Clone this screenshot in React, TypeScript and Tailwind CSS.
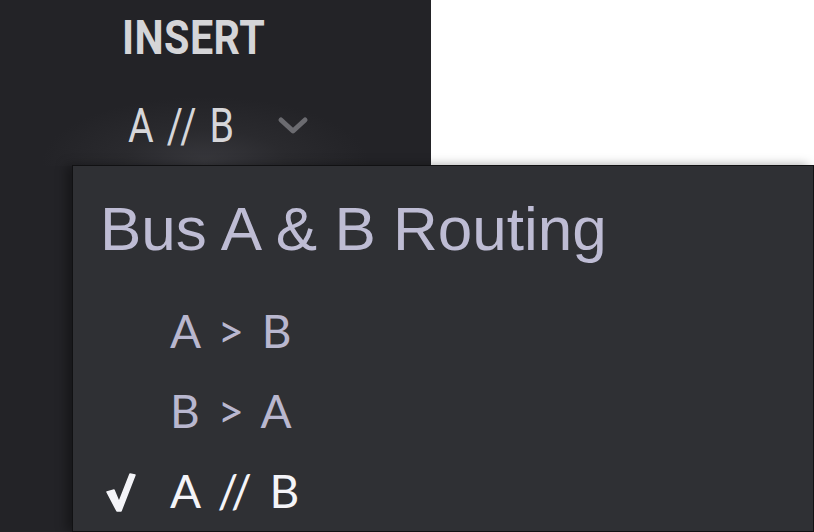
import { useState } from "react";

const routes = ["A > B", "B > A", "A // B"];

export default function App() {
  const [selected, setSelected] = useState("A // B");

  return (
    <div className="relative w-[814px] h-[532px] overflow-hidden bg-white">
      {/* insert slot panel */}
      <div className="w-[431px] h-full bg-[#232327] flex flex-col items-start">
        <div className="pl-[122px] pt-[14px] h-[70px]">
          <h1 className="font-['Roboto',sans-serif] font-bold text-[48px] leading-[48px] text-[#d5d5d8] origin-left scale-x-[0.86] tracking-[0.5px]">
            INSERT
          </h1>
        </div>
        <button className="mt-[26px] ml-[40px] w-[330px] h-[70px] flex items-start gap-[44px] pl-[88px] pt-[6px] bg-[radial-gradient(ellipse_at_50%_95%,#38383d_0%,#2a2a2e_35%,transparent_70%)]">
          <span className="font-['Roboto',sans-serif] font-normal text-[48px] leading-[48px] text-[#d6d6d9] origin-left scale-x-[0.82] tracking-[2px] whitespace-pre">
            A // B
          </span>
          <svg width="32" height="20" viewBox="0 0 32 20" className="-ml-[26px] mt-[14px]">
            <path d="M4 4 L16 15 L28 4" fill="none" stroke="#6b6b70" strokeWidth="5" strokeLinecap="round" strokeLinejoin="round" />
          </svg>
        </button>
      </div>

      {/* routing dropdown */}
      <div className="absolute left-[72px] top-[165px] right-0 bottom-0 bg-[#2f3034] border border-[#111113] shadow-[-6px_0_10px_rgba(0,0,0,0.35)]">
        <div className="pl-[27px] pt-[27px] font-['Liberation_Sans',Arial,sans-serif] text-[62px] leading-[72px] text-[#bebcd4]">
          Bus A &amp; B Routing
        </div>
        <ul className="mt-[26px] flex flex-col">
          {routes.map((r) => {
            const on = r === selected;
            return (
              <li
                key={r}
                onClick={() => setSelected(r)}
                className="h-[80px] flex items-center cursor-pointer"
              >
                <span className="w-[97px] flex pl-[33px]">
                  {on && (
                    <svg width="30" height="40" viewBox="0 0 30 40" className="mt-[2px]">
                      <path d="M1 20 L8 18 L13 30 L24 2 L29 3 L15 39 L11 39 Z" fill="#f4f4f8" strokeLinejoin="round" stroke="#f4f4f8" strokeWidth="1.5" />
                    </svg>
                  )}
                </span>
                <span
                  className={`font-['Lato',sans-serif] text-[46px] leading-[56px] whitespace-pre tracking-[3px] ${
                    on ? "text-[#f4f4f8]" : "text-[#b9b7cf]"
                  }`}
                >
                  {r}
                </span>
              </li>
            );
          })}
        </ul>
      </div>
    </div>
  );
}
